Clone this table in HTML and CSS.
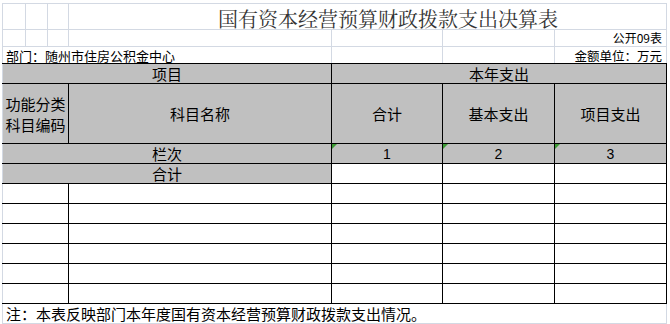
FILE: index.html
```html
<!DOCTYPE html>
<html lang="zh">
<head>
<meta charset="utf-8">
<title>国有资本经营预算财政拨款支出决算表</title>
<link rel="stylesheet" href="styles.css">
</head>
<body>
<table class="sheet">
  <colgroup>
    <col class="c-a"><col class="c-b"><col class="c-c"><col class="c-d"><col class="c-e"><col class="c-f"><col class="c-g">
  </colgroup>
  <tr class="r-title">
    <td class="g"></td><td class="g"></td><td class="g"></td>
    <td class="g title" colspan="4">国有资本经营预算财政拨款支出决算表</td>
  </tr>
  <tr class="r-small">
    <td class="g"></td><td class="g"></td><td class="g"></td><td class="g"></td><td class="g"></td><td class="g"></td>
    <td class="g right code">公开09表</td>
  </tr>
  <tr class="r-small">
    <td class="g gb dept" colspan="4">部门：随州市住房公积金中心</td>
    <td class="g gb"></td><td class="g gb"></td>
    <td class="g gb right unit">金额单位：万元</td>
  </tr>
  <tr class="r-20">
    <td class="h edge" colspan="4">项目</td>
    <td class="h" colspan="3">本年支出</td>
  </tr>
  <tr class="r-60">
    <td class="h edge two" colspan="3">功能分类<br>科目编码</td>
    <td class="h">科目名称</td>
    <td class="h">合计</td>
    <td class="h">基本支出</td>
    <td class="h">项目支出</td>
  </tr>
  <tr class="r-20">
    <td class="h edge" colspan="4">栏次</td>
    <td class="h num mark">1</td>
    <td class="h num mark">2</td>
    <td class="h num mark">3</td>
  </tr>
  <tr class="r-20">
    <td class="h edge" colspan="4">合计</td>
    <td class="w"></td><td class="w"></td><td class="w"></td>
  </tr>
  <tr class="r-20"><td class="w edge" colspan="3"></td><td class="w"></td><td class="w"></td><td class="w"></td><td class="w"></td></tr>
  <tr class="r-20"><td class="w edge" colspan="3"></td><td class="w"></td><td class="w"></td><td class="w"></td><td class="w"></td></tr>
  <tr class="r-20"><td class="w edge" colspan="3"></td><td class="w"></td><td class="w"></td><td class="w"></td><td class="w"></td></tr>
  <tr class="r-20"><td class="w edge" colspan="3"></td><td class="w"></td><td class="w"></td><td class="w"></td><td class="w"></td></tr>
  <tr class="r-20"><td class="w edge" colspan="3"></td><td class="w"></td><td class="w"></td><td class="w"></td><td class="w"></td></tr>
  <tr class="r-20"><td class="w edge" colspan="3"></td><td class="w"></td><td class="w"></td><td class="w"></td><td class="w"></td></tr>
  <tr class="r-20">
    <td class="g note" colspan="7">注：本表反映部门本年度国有资本经营预算财政拨款支出情况。</td>
  </tr>
</table>
</body>
</html>
```

FILE: styles.css
```css
html, body {
  margin: 0;
  padding: 0;
  background: #ffffff;
}

body {
  font-family: "Noto Sans CJK SC", "Noto Sans", sans-serif;
  color: #000;
}

.sheet {
  margin: 3px 0 0 2px;
  border-collapse: collapse;
  table-layout: fixed;
  width: 665px;
}

.c-a { width: 23px; }
.c-b { width: 22px; }
.c-c { width: 21px; }
.c-d { width: 263px; }
.c-e { width: 111px; }
.c-f { width: 112px; }
.c-g { width: 112px; }

td {
  padding: 0;
  white-space: nowrap;
  overflow: visible;
}

.r-title td { height: 25px; }
.r-small td { height: 16px; }
.r-20 td { height: 19px; }
.r-60 td { height: 59px; }

.g {
  border: 1px solid #d3d9e3;
}

.gb {
  border-bottom: 1px solid #000;
}

.title {
  font-family: "Noto Serif CJK SC", "Noto Sans CJK SC", serif;
  font-size: 20px;
  line-height: 20px;
  color: #333;
  text-align: center;
  padding-left: 41px;
  vertical-align: bottom;
}

.right {
  text-align: right;
  line-height: 13px;
  padding-right: 4px;
}

.r-small .code {
  font-size: 12px;
  line-height: 12px;
  vertical-align: top;
  padding-top: 2px;
  height: 14px;
}

.r-small .unit {
  font-size: 12.5px;
  vertical-align: bottom;
  padding-bottom: 1px;
  height: 15px;
}

.dept {
  font-size: 13px;
  line-height: 13px;
  padding-left: 3px;
  vertical-align: middle;
}

.h {
  background: #c0c0c0;
  border: 1px solid #000;
  text-align: center;
  vertical-align: middle;
  font-size: 15px;
  line-height: 18px;
}

.w {
  background: #fff;
  border: 1px solid #000;
}

.edge {
  border-left: 1px solid #d3d9e3;
}

.two {
  line-height: 21px;
}

.num {
  font-family: "Liberation Sans", "Noto Sans CJK SC", sans-serif;
  font-size: 14px;
}

.mark {
  position: relative;
}

.mark::before {
  content: "";
  position: absolute;
  left: 0;
  top: 0;
  width: 0;
  height: 0;
  border-top: 5px solid #3d9b35;
  border-right: 5px solid transparent;
}

.note {
  font-size: 15px;
  line-height: 18px;
  padding-left: 3px;
  border-top: none;
  vertical-align: middle;
}
```
